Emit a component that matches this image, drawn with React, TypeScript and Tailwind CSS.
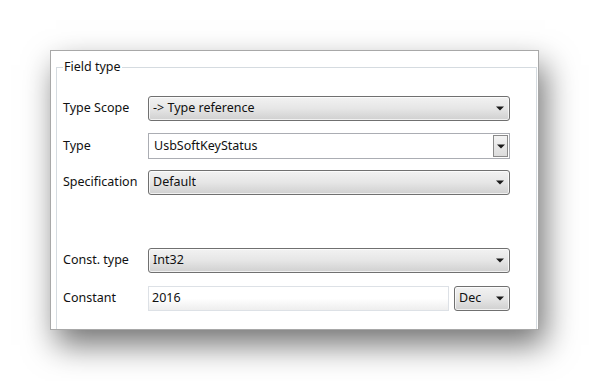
import React from "react";

const Arrow = () => (
  <svg width="8" height="5" viewBox="0 0 8 5" className="shrink-0">
    <path d="M0 0.5 H8 L4 4.5 Z" fill="#1a1a1a" />
  </svg>
);

interface ComboProps {
  value: string;
  className?: string;
}

// read-only combo box, Win7 gradient button look
const Combo: React.FC<ComboProps> = ({ value, className }) => (
  <div
    className={`flex h-[25px] items-center justify-between rounded-[3px] border border-[#707070] bg-gradient-to-b from-[#f2f2f2] via-[#e6e6e6] to-[#d0d0d0] pl-[4px] pr-[5px] shadow-[inset_0_0_0_1px_rgba(255,255,255,0.7)] ${className ?? ""}`}
  >
    <span className="truncate">{value}</span>
    <Arrow />
  </div>
);

// editable combo: text box with a small drop button
const EditCombo: React.FC<ComboProps> = ({ value }) => (
  <div className="flex h-[26px] items-stretch border border-[#abadb3] bg-white">
    <span className="flex flex-1 items-center pl-[5px]">{value}</span>
    <div className="my-[1px] mr-[1px] flex w-[15px] items-center justify-center border border-[#8a8a8a] bg-gradient-to-b from-[#f4f4f4] to-[#dcdcdc]">
      <Arrow />
    </div>
  </div>
);

const Row: React.FC<{ label: string; className?: string; children: React.ReactNode }> = ({
  label,
  className,
  children,
}) => (
  <div className={`flex items-center ${className ?? ""}`}>
    <span className="w-[85px] shrink-0">{label}</span>
    <div className="flex-1">{children}</div>
  </div>
);

export default function App() {
  return (
    <div
      className="h-[381px] w-[589px] overflow-hidden bg-white pl-[50px] pt-[50px] text-[12.5px] text-[#111]"
      style={{ fontFamily: '"Segoe UI", "Noto Sans", "Open Sans", sans-serif' }}
    >
      <div className="h-[280px] w-[489px] overflow-hidden border border-[#a8a8a8] bg-white shadow-[6px_15px_30px_rgba(0,0,0,0.55)]">
        <fieldset className="ml-[5px] mr-[1px] mt-[8px] h-[300px] border border-[#d5dbe0] pl-[6px] pr-[26px]">
          <legend className="px-[1px] leading-[16px]">Field type</legend>

          <div className="flex flex-col pt-[21px]">
            <Row label="Type Scope">
              <Combo value="-> Type reference" />
            </Row>
            <Row label="Type" className="mt-[12px]">
              <EditCombo value="UsbSoftKeyStatus" />
            </Row>
            <Row label="Specification" className="mt-[11px]">
              <Combo value="Default" className="h-[24px]" />
            </Row>
            <Row label="Const. type" className="mt-[53px]">
              <Combo value="Int32" />
            </Row>
            <Row label="Constant" className="mt-[13px]">
              <div className="flex items-center gap-[5px]">
                <div className="flex h-[25px] flex-1 items-center border border-[#dde1e6] bg-gradient-to-b from-white via-white to-[#eeeeee] pl-[3px]">
                  2016
                </div>
                <Combo value="Dec" className="w-[56px]" />
              </div>
            </Row>
          </div>
        </fieldset>
      </div>
    </div>
  );
}
